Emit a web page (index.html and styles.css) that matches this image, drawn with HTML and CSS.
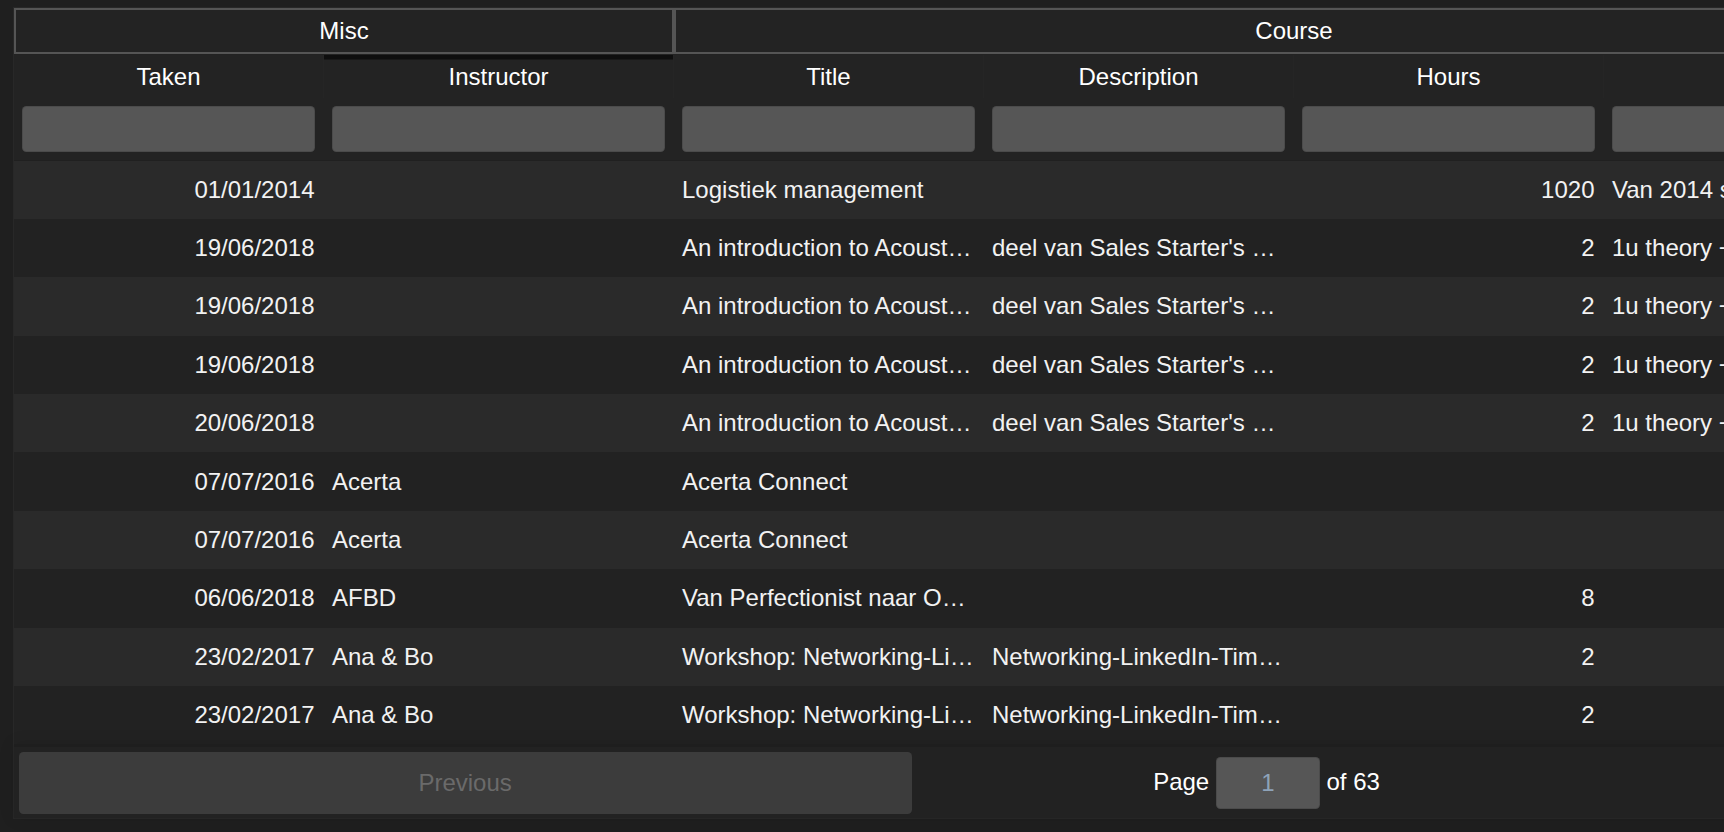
FILE: index.html
```html
<!DOCTYPE html>
<html lang="nl">
<head>
<meta charset="utf-8">
<title>Courses</title>
<link rel="stylesheet" href="styles.css">
</head>
<body>
<div class="page">
  <div class="rt">
    <div class="rt-table">
      <div class="thead groups">
        <div class="tr">
          <div class="group g-misc">Misc</div>
          <div class="group g-course">Course</div>
        </div>
      </div>
      <div class="thead header">
        <div class="tr">
          <div class="th c-taken">Taken</div>
          <div class="th c-instr sorted">Instructor</div>
          <div class="th c-w">Title</div>
          <div class="th c-w">Description</div>
          <div class="th c-w">Hours</div>
          <div class="th c-w">Notes</div>
        </div>
      </div>
      <div class="thead filters">
        <div class="tr">
          <div class="fth c-taken"><input type="text"></div>
          <div class="fth c-instr"><input type="text"></div>
          <div class="fth c-w"><input type="text"></div>
          <div class="fth c-w"><input type="text"></div>
          <div class="fth c-w"><input type="text"></div>
          <div class="fth c-w"><input type="text"></div>
        </div>
      </div>
      <div class="tbody">
        <div class="tr odd">
          <div class="td c-taken right">01/01/2014</div>
          <div class="td c-instr"></div>
          <div class="td c-w">Logistiek management</div>
          <div class="td c-w"></div>
          <div class="td c-w right">1020</div>
          <div class="td c-w">Van 2014 september tot 2016</div>
        </div>
        <div class="tr even">
          <div class="td c-taken right">19/06/2018</div>
          <div class="td c-instr"></div>
          <div class="td c-w">An introduction to Acoustics</div>
          <div class="td c-w">deel van Sales Starter's program</div>
          <div class="td c-w right">2</div>
          <div class="td c-w">1u theory + 1u practice</div>
        </div>
        <div class="tr odd">
          <div class="td c-taken right">19/06/2018</div>
          <div class="td c-instr"></div>
          <div class="td c-w">An introduction to Acoustics</div>
          <div class="td c-w">deel van Sales Starter's program</div>
          <div class="td c-w right">2</div>
          <div class="td c-w">1u theory + 1u practice</div>
        </div>
        <div class="tr even">
          <div class="td c-taken right">19/06/2018</div>
          <div class="td c-instr"></div>
          <div class="td c-w">An introduction to Acoustics</div>
          <div class="td c-w">deel van Sales Starter's program</div>
          <div class="td c-w right">2</div>
          <div class="td c-w">1u theory + 1u practice</div>
        </div>
        <div class="tr odd">
          <div class="td c-taken right">20/06/2018</div>
          <div class="td c-instr"></div>
          <div class="td c-w">An introduction to Acoustics</div>
          <div class="td c-w">deel van Sales Starter's program</div>
          <div class="td c-w right">2</div>
          <div class="td c-w">1u theory + 1u practice</div>
        </div>
        <div class="tr even">
          <div class="td c-taken right">07/07/2016</div>
          <div class="td c-instr">Acerta</div>
          <div class="td c-w">Acerta Connect</div>
          <div class="td c-w"></div>
          <div class="td c-w right"></div>
          <div class="td c-w"></div>
        </div>
        <div class="tr odd">
          <div class="td c-taken right">07/07/2016</div>
          <div class="td c-instr">Acerta</div>
          <div class="td c-w">Acerta Connect</div>
          <div class="td c-w"></div>
          <div class="td c-w right"></div>
          <div class="td c-w"></div>
        </div>
        <div class="tr even">
          <div class="td c-taken right">06/06/2018</div>
          <div class="td c-instr">AFBD</div>
          <div class="td c-w">Van Perfectionist naar Optimalist</div>
          <div class="td c-w"></div>
          <div class="td c-w right">8</div>
          <div class="td c-w"></div>
        </div>
        <div class="tr odd">
          <div class="td c-taken right">23/02/2017</div>
          <div class="td c-instr">Ana &amp; Bo</div>
          <div class="td c-w">Workshop: Networking-LinkedIn-Timemanagement</div>
          <div class="td c-w">Networking-LinkedIn-Timemanagement</div>
          <div class="td c-w right">2</div>
          <div class="td c-w"></div>
        </div>
        <div class="tr even">
          <div class="td c-taken right">23/02/2017</div>
          <div class="td c-instr">Ana &amp; Bo</div>
          <div class="td c-w">Workshop: Networking-LinkedIn-Timemanagement</div>
          <div class="td c-w">Networking-LinkedIn-Timemanagement</div>
          <div class="td c-w right">2</div>
          <div class="td c-w"></div>
        </div>
      </div>
    </div>
    <div class="pagination">
      <div class="prev"><button class="btn" disabled>Previous</button></div>
      <div class="center">
        <span class="page-info">Page <span class="jump"><input type="text" value="1"></span> of <span class="total">63</span></span>
        <span class="size"><select><option>10 rows</option></select></span>
      </div>
      <div class="next"><button class="btn">Next</button></div>
    </div>
  </div>
</div>
</body>
</html>
```
FILE: styles.css
```css
html, body {
  margin: 0;
  padding: 0;
  background: #1f1f1f;
}

body {
  font-family: "Liberation Sans", Arial, sans-serif;
  font-size: 24px;
  color: #ffffff;
}

.page {
  width: 1724px;
  height: 832px;
  overflow: hidden;
  padding: 7px 0 0 13px;
  box-sizing: border-box;
}

.rt {
  width: 3137px;
  border: 1px solid #282828;
  background: #232323;
  box-sizing: border-box;
  display: flex;
  flex-direction: column;
}

.tr {
  display: flex;
}

.c-taken { width: 310px; flex: none; }
.c-instr { width: 350px; flex: none; }
.c-w { width: 310px; flex: none; }

/* group header */
.groups {
  border-bottom: 1.5px solid #222222;
}

.group {
  height: 46px;
  border: 2px solid #555555;
  box-sizing: border-box;
  display: flex;
  align-items: center;
  justify-content: center;
  flex: none;
}

.g-misc { width: 660px; }
.g-course { width: 1240px; }

/* column header */
.header .th {
  height: 43px;
  box-sizing: border-box;
  display: flex;
  align-items: center;
  justify-content: center;
  border-right: 1px solid #252525;
}

.sorted {
  box-shadow: inset 0 4.5px 0 0 rgba(0, 0, 0, 0.6);
}

/* filters */
.filters {
  border-bottom: 1px solid #202020;
}

.fth {
  height: 61.5px;
  padding: 7.5px 9.5px 0 8px;
  box-sizing: border-box;
}

.fth input {
  display: block;
  width: 100%;
  height: 46px;
  box-sizing: border-box;
  background: #565656;
  border: 1.5px solid rgba(0, 0, 0, 0.12);
  border-radius: 4.5px;
  font: inherit;
  color: #ffffff;
  padding: 5px 10px;
  outline: none;
}

/* body */
.tbody .tr {
  height: 58.4px;
  align-items: center;
}

.odd { background: #2a2a2a; }
.even { background: #222222; }

.td {
  padding: 0 9.5px 0 8px;
  box-sizing: border-box;
  white-space: nowrap;
  overflow: hidden;
  text-overflow: ellipsis;
  color: #f2f2f2;
}

.right { text-align: right; }

/* pagination */
.pagination {
  display: flex;
  padding: 4.5px;
  border-top: 3px solid rgba(0, 0, 0, 0.1);
  box-shadow: 0 0 15px 0 rgba(0, 0, 0, 0.1);
  background: #222222;
}

.prev, .next {
  flex: 1;
  text-align: center;
}

.center {
  flex: 1.5;
  display: flex;
  align-items: center;
  justify-content: space-around;
}

.btn {
  width: 100%;
  height: 62px;
  border: 0;
  border-radius: 4.5px;
  background: #3c3c3c;
  color: #6a6a6a;
  font: inherit;
  padding: 0;
}

.page-info {
  margin: 4.5px 15px;
  white-space: nowrap;
}

.jump {
  display: inline-block;
  vertical-align: middle;
}

.jump input {
  display: block;
  width: 104px;
  height: 52.5px;
  box-sizing: border-box;
  background: #565656;
  border: 1.5px solid rgba(0, 0, 0, 0.12);
  border-radius: 4.5px;
  font: inherit;
  color: #8ea3b9;
  text-align: center;
  padding: 0;
  outline: none;
}

.size {
  margin: 4.5px 15px;
}

.size select {
  width: 147px;
  height: 52px;
  background: #565656;
  color: #ffffff;
  font: inherit;
  border: 1.5px solid rgba(0, 0, 0, 0.12);
  border-radius: 4.5px;
}
```
